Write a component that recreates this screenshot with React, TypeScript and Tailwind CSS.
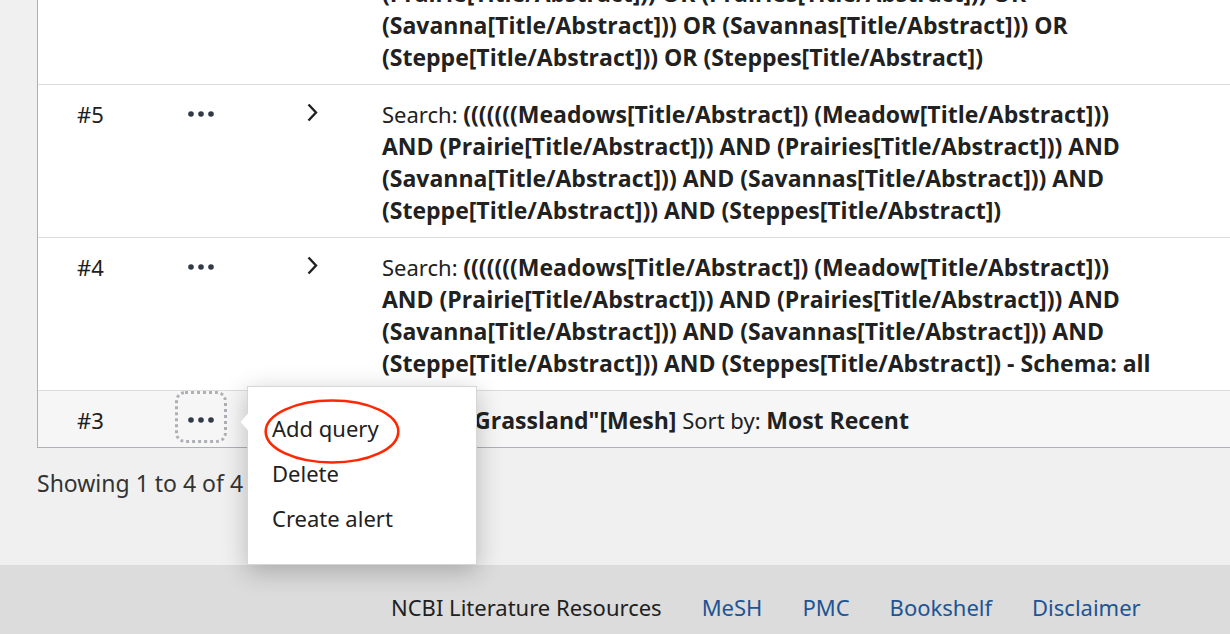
import { useState } from "react";
import type { ReactNode } from "react";

type QueryRow = { id: number; lines: ReactNode[]; clipped?: boolean; expandable?: boolean };

function Term({ children }: { children: ReactNode }) {
  return <b className="font-['Open_Sans',sans-serif] text-[23px]/8 font-bold">{children}</b>;
}

const rows: QueryRow[] = [
  {
    id: 6,
    clipped: true,
    lines: [
      <Term>(Prairie[Title/Abstract])) OR (Prairies[Title/Abstract])) OR</Term>,
      <Term>(Savanna[Title/Abstract])) OR (Savannas[Title/Abstract])) OR</Term>,
      <Term>(Steppe[Title/Abstract])) OR (Steppes[Title/Abstract])</Term>,
    ],
  },
  {
    id: 5,
    expandable: true,
    lines: [
      <>Search: <Term>(((((((Meadows[Title/Abstract]) (Meadow[Title/Abstract]))</Term></>,
      <Term>AND (Prairie[Title/Abstract])) AND (Prairies[Title/Abstract])) AND</Term>,
      <Term>(Savanna[Title/Abstract])) AND (Savannas[Title/Abstract])) AND</Term>,
      <Term>(Steppe[Title/Abstract])) AND (Steppes[Title/Abstract])</Term>,
    ],
  },
  {
    id: 4,
    expandable: true,
    lines: [
      <>Search: <Term>(((((((Meadows[Title/Abstract]) (Meadow[Title/Abstract]))</Term></>,
      <Term>AND (Prairie[Title/Abstract])) AND (Prairies[Title/Abstract])) AND</Term>,
      <Term>(Savanna[Title/Abstract])) AND (Savannas[Title/Abstract])) AND</Term>,
      <Term>(Steppe[Title/Abstract])) AND (Steppes[Title/Abstract]) - Schema: all</Term>,
    ],
  },
  {
    id: 3,
    lines: [
      <>
        Search: <Term>"Grassland"[Mesh]</Term> Sort by: <Term>Most Recent</Term>
      </>,
    ],
  },
];

const links = ["MeSH", "PMC", "Bookshelf", "Disclaimer"];

function Dots() {
  return (
    <svg viewBox="0 0 28 8" className="h-2 w-7" fill="#323a45" aria-hidden="true">
      <circle cx="4" cy="4" r="2.8" />
      <circle cx="14" cy="4" r="2.8" />
      <circle cx="24" cy="4" r="2.8" />
    </svg>
  );
}

function ActionsMenu() {
  return (
    <div
      role="menu"
      className="absolute top-[-5px] left-[86px] z-10 w-[230px] border border-[#d6d6d6] bg-white pt-[18px] pb-6 shadow-[0_6px_24px_rgba(0,0,0,0.24)]"
    >
      <svg viewBox="0 0 10 20" className="absolute top-[25px] left-[-9px] h-5 w-[10px]" aria-hidden="true">
        <path d="M10 0.5 L0.7 10 L10 19.5 Z" fill="#fff" />
        <path d="M9 1 L0.7 10 L9 19" fill="none" stroke="#dcdcdc" />
      </svg>
      {["Add query", "Delete", "Create alert"].map((item) => (
        <button key={item} type="button" role="menuitem" className="block h-[45px] w-full pl-6 text-left">
          {item}
        </button>
      ))}
      <svg viewBox="0 0 138 68" className="pointer-events-none absolute top-[10px] left-[15px] h-[68px] w-[138px]" aria-hidden="true">
        <ellipse cx="69" cy="34.5" rx="66.3" ry="31" fill="none" stroke="#ff2600" strokeWidth="2.6" />
      </svg>
    </div>
  );
}

export default function App() {
  const [openRow, setOpenRow] = useState<number | null>(3);
  return (
    <div className="flex min-h-screen flex-col overflow-x-clip bg-[#f0f0f0] font-['Noto_Sans',sans-serif] text-[22px]/8 text-[#212121]">
      <main className="flex-1 pb-[66px] pl-[37px]">
        <table className="w-full table-fixed border-separate border-spacing-0 border-b border-l border-[#aeb0b5] bg-white">
          <colgroup>
            <col className="w-[123px]" />
            <col className="w-[138px]" />
            <col className="w-[83px]" />
            <col />
          </colgroup>
          <tbody>
            {rows.map((row, i) => {
              const open = openRow === row.id;
              const cell = i > 0 ? "border-t border-[#dcdcdc] p-0 align-top" : "p-0 align-top";
              return (
                <tr key={row.id} className={row.id === 3 ? "bg-[#f6f6f6]" : "bg-white"}>
                  <td className={cell}>
                    {!row.clipped && <div className="pt-[13px] pl-[39px]">#{row.id}</div>}
                  </td>
                  <td className={cell}>
                    {!row.clipped && (
                      <div className="relative h-14 pl-[14px]">
                        <button
                          type="button"
                          aria-label={`Actions for query ${row.id}`}
                          aria-expanded={open}
                          onClick={() => setOpenRow(open ? null : row.id)}
                          className={
                            open
                              ? "flex h-[52px] w-[52px] items-center justify-center rounded-[10px] border-3 border-dotted border-[#aeb0b5] pt-[6px]"
                              : "flex h-[52px] w-[52px] items-center justify-center border-3 border-transparent pt-[6px]"
                          }
                        >
                          <Dots />
                        </button>
                        {open && <ActionsMenu />}
                      </div>
                    )}
                  </td>
                  <td className={cell}>
                    {row.expandable && (
                      <button type="button" aria-label={`Show details of query ${row.id}`} className="mt-[17px] ml-[7px] block">
                        <svg viewBox="0 0 14 20" className="h-5 w-[14px]" fill="none" stroke="#212121" strokeWidth="2.4" aria-hidden="true">
                          <path d="M2.5 2.5 L10 10.5 L2.5 18.5" />
                        </svg>
                      </button>
                    )}
                  </td>
                  <td className={cell}>
                    <div
                      className={
                        row.clipped
                          ? "flex h-[84px] flex-col justify-end overflow-hidden pb-[11px]"
                          : "flex flex-col pt-[13px] pb-[11px]"
                      }
                    >
                      {row.lines.map((line, n) => (
                        <div key={n} className="h-8 shrink-0 whitespace-nowrap">{line}</div>
                      ))}
                    </div>
                  </td>
                </tr>
              );
            })}
          </tbody>
        </table>
        <p className="pt-[19px] text-[23px]/8 text-[#333]">Showing 1 to 4 of 4</p>
      </main>
      <footer className="flex gap-10 bg-[#dcdcdc] pt-[26px] pb-[11px] pl-[391px]">
        <span>NCBI Literature Resources</span>
        {links.map((l) => (
          <a key={l} href="#" className="text-[#205493]">{l}</a>
        ))}
      </footer>
    </div>
  );
}
